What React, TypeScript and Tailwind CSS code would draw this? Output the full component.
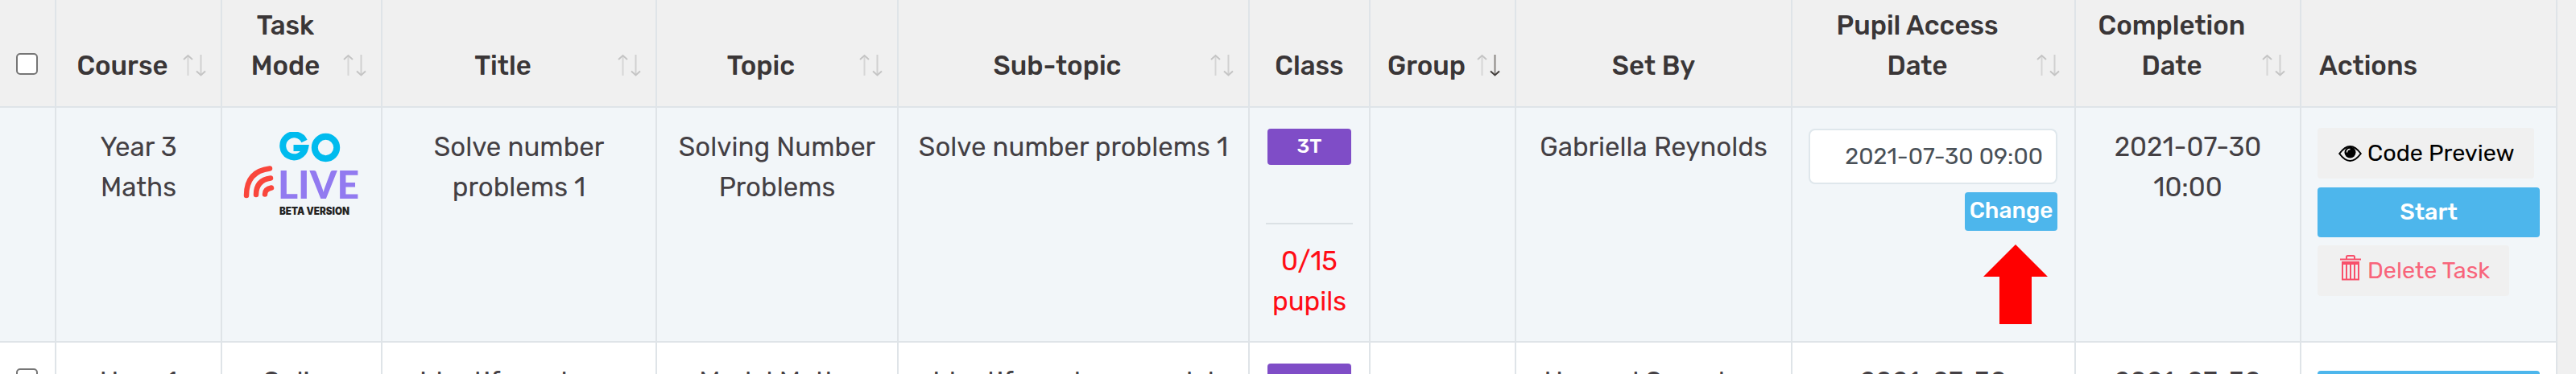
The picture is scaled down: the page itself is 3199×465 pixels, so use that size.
import React from 'react';

const headers = [
  { label: 'Course', sort: 'none' },
  { label: 'Task Mode', sort: 'none' },
  { label: 'Title', sort: 'none' },
  { label: 'Topic', sort: 'none' },
  { label: 'Sub-topic', sort: 'none' },
  { label: 'Class' },
  { label: 'Group', sort: 'desc' },
  { label: 'Set By' },
  { label: 'Pupil Access Date', sort: 'none' },
  { label: 'Completion Date', sort: 'none' },
];

const labelPadding: Record<string, string> = {
  Course: 'pl-[25px] pr-[65px]',
  'Task Mode': 'pl-[30px] pr-[70px]',
  Title: 'pl-[25px] pr-[65px]',
  Topic: 'pl-[25px] pr-[65px]',
  'Sub-topic': 'pl-[25px] pr-[65px]',
  Class: 'px-4',
  Group: 'pl-[18px] pr-[58px]',
  'Set By': 'px-4',
  'Pupil Access Date': 'pl-[25px] pr-[65px]',
  'Completion Date': 'pl-[20px] pr-[60px]',
};

const columns =
  'grid grid-cols-[70px_206px_199px_341px_300px_436px_150px_181px_343px_352px_280px_318px]';

const cell = 'border-r-2 border-b-2 border-[#dfe4e8]';

function SortIcon({ active }: { active: boolean }) {
  return (
    <svg
      viewBox="0 0 29 28"
      className="absolute right-[18px] bottom-[37px] h-7 w-[29px]"
      fill="none"
      strokeWidth="2"
    >
      <path d="M6.5 27V3" stroke="#d6d6d6" />
      <path d="M1 7l5.500-5 5.500 5" stroke="#c4c4c4" />
      <path d="M22.500 1v24" stroke={active ? '#8a8682' : '#d0d0d0'} />
      <path d="M17 21.500l5.500 5 5.500-5" stroke={active ? '#403c3a' : '#c4c4c4'} />
    </svg>
  );
}

function Checkbox() {
  return <span className="block h-[27px] w-[27px] rounded-[5px] border-2 border-[#767676] bg-white" />;
}

function GoLiveLogo() {
  return (
    <svg viewBox="0 0 144 106" className="h-[106px] w-[144px]">
      <g fill="none" stroke="#00bbee" strokeWidth="8">
        <path d="M76 11.500A14 14 0 1 0 77 20H62.500" />
        <circle cx="102.500" cy="19.500" r="13.700" />
      </g>
      <g fill="none" stroke="#f9463c" strokeWidth="6.500" strokeLinecap="round">
        <path d="M33 45.500Q4 49 4 79" />
        <path d="M34 57.500Q16 60 16 78" />
        <path d="M35 69.500Q27 71 27 77.500" />
      </g>
      <text
        x="43"
        y="83"
        textLength="101"
        lengthAdjust="spacingAndGlyphs"
        fill="#927af0"
        fontFamily="Lato, sans-serif"
        fontWeight="900"
        fontSize="48"
      >
        LIVE
      </text>
      <text
        x="45"
        y="103"
        textLength="87"
        lengthAdjust="spacingAndGlyphs"
        fill="#222222"
        fontFamily="Inter, sans-serif"
        fontWeight="900"
        fontSize="12.500"
      >
        BETA VERSION
      </text>
    </svg>
  );
}

function EyeIcon() {
  return (
    <svg viewBox="0 0 29 20" className="h-5 w-[29px]">
      <path d="M1.200 10Q14.500-8 27.800 10Q14.500 28 1.200 10z" fill="none" stroke="#000" strokeWidth="2" />
      <circle cx="14.500" cy="8.500" r="7" fill="#000" />
      <path d="M10.500 8.500Q10.500 4.500 14.500 4.500" fill="none" stroke="#f0f0f0" strokeWidth="1.500" />
    </svg>
  );
}

function TrashIcon() {
  return (
    <svg viewBox="0 0 26 32" className="-mt-2 h-8 w-[26px]" fill="none" stroke="#f8506b" strokeWidth="2">
      <path d="M0 5.500h26" />
      <path d="M8 5V2.500Q8 1 9.500 1h7Q18 1 18 2.500V5" />
      <path d="M2 10h22" strokeWidth="4" />
      <path d="M3 9v21.500h20V9M8 10v20M13 10v20M18 10v20" />
    </svg>
  );
}

export default function App() {
  return (
    <div className="h-[465px] w-[3199px] overflow-hidden bg-[#f0f0f0] font-[Rubik,Roboto,sans-serif] text-[33px] leading-[49.500px] text-[#444044]">
      <div className="w-[3176px]">
        <div className={`${columns} h-[134px] font-medium text-[#3a3637]`}>
          <div className={`${cell} flex items-end pb-[39px] pl-5`}>
            <Checkbox />
          </div>
          {headers.map((header) => (
            <div
              key={header.label}
              className={`${cell} ${labelPadding[header.label]} relative flex items-end justify-center pb-[26px] text-center`}
            >
              <span>{header.label}</span>
              {header.sort && <SortIcon active={header.sort === 'desc'} />}
            </div>
          ))}
          <div className={`${cell} flex items-end pb-[26px] pl-[22px]`}>Actions</div>
        </div>

        <div className={`${columns} h-[292px] bg-[#f2f6f9] text-center`}>
          <div className={cell} />
          <div className={`${cell} px-10 pt-6`}>Year 3 Maths</div>
          <div className={`${cell} pt-[30px] pl-[26px]`}>
            <GoLiveLogo />
          </div>
          <div className={`${cell} px-8 pt-6`}>Solve number problems 1</div>
          <div className={`${cell} px-5 pt-6`}>Solving Number Problems</div>
          <div className={`${cell} pt-6`}>Solve number problems 1</div>
          <div className={`${cell} px-5 pt-[26px]`}>
            <div className="mx-0.5 h-[45px] rounded bg-[#7f4dc7] text-[25px] leading-[44px] font-medium text-white">
              3T
            </div>
            <hr className="mt-[72px] border-t-2 border-[#dbe1e5]" />
            <div className="mt-[21px] leading-[49.500px] text-[#ff0d16]">0/15 pupils</div>
          </div>
          <div className={cell} />
          <div className={`${cell} pt-6`}>Gabriella Reynolds</div>
          <div className={`${cell} flex flex-col items-end pt-[26px] pr-[21px] pl-5`}>
            <div className="h-[69px] w-full rounded-lg border-2 border-[#dfe7ec] bg-white pr-4 text-right text-[28.800px] leading-[65px] text-[#495057]">
              2021-07-30 09:00
            </div>
            <button className="mt-[10px] h-[48px] w-[115px] rounded bg-[#4db6ec] pb-0.5 text-[28px] leading-[46px] font-medium text-white">
              Change
            </button>
            <svg viewBox="0 0 80 99" className="mt-[17px] mr-[12px] h-[99px] w-20" fill="#ff0000">
              <path d="M40 0l40 40H60v59H20V40H0z" />
            </svg>
          </div>
          <div className={`${cell} px-8 pt-6`}>2021-07-30 10:00</div>
          <div className={`${cell} flex flex-col items-start pt-[25px] pl-5 text-[28.800px]`}>
            <button className="flex h-[63px] w-[269px] items-center gap-[7px] rounded bg-[#f0f0f0] pl-[26px] text-black">
              <EyeIcon />
              Code Preview
            </button>
            <button className="mt-[11px] h-[62px] w-[276px] rounded bg-[#4db6ec] font-medium text-white">
              Start
            </button>
            <button className="mt-[10px] flex h-[63px] w-[238px] items-center gap-[8px] rounded bg-[#f0f0f0] pl-[28px] text-[#f8657b]">
              <TrashIcon />
              Delete Task
            </button>
          </div>
        </div>

        <div className={`${columns} h-[292px] bg-white text-center`}>
          <div className={`${cell} pt-[32px] pl-5`}>
            <Checkbox />
          </div>
          <div className={`${cell} px-8 pt-6`}>Hour 1</div>
          <div className={`${cell} px-8 pt-6`}>Online</div>
          <div className={`${cell} px-8 pt-6`}>Identify and use model</div>
          <div className={`${cell} px-5 pt-6`}>Model Maths</div>
          <div className={`${cell} pt-6`}>Identify and use model</div>
          <div className={`${cell} px-5 pt-[26px]`}>
            <div className="mx-0.5 h-[45px] rounded bg-[#7f4dc7]" />
          </div>
          <div className={cell} />
          <div className={`${cell} pt-6`}>Howard Saunders</div>
          <div className={`${cell} px-20 pt-6`}>2021-07-30</div>
          <div className={`${cell} px-8 pt-6`}>2021-07-30</div>
          <div className={`${cell} pt-[35px] pl-5`}>
            <div className="h-[62px] w-[276px] rounded bg-[#4db6ec]" />
          </div>
        </div>
      </div>
    </div>
  );
}
